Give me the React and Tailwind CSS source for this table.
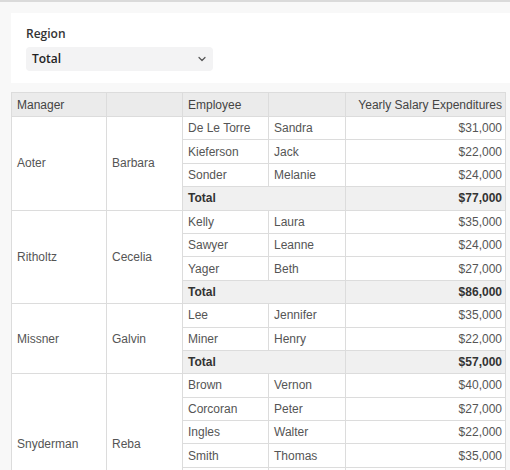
import React from "react";

const groups = [
  {
    last: "Aoter",
    first: "Barbara",
    rows: [
      ["De Le Torre", "Sandra", "$31,000"],
      ["Kieferson", "Jack", "$22,000"],
      ["Sonder", "Melanie", "$24,000"],
    ],
    total: "$77,000",
  },
  {
    last: "Ritholtz",
    first: "Cecelia",
    rows: [
      ["Kelly", "Laura", "$35,000"],
      ["Sawyer", "Leanne", "$24,000"],
      ["Yager", "Beth", "$27,000"],
    ],
    total: "$86,000",
  },
  {
    last: "Missner",
    first: "Galvin",
    rows: [
      ["Lee", "Jennifer", "$35,000"],
      ["Miner", "Henry", "$22,000"],
    ],
    total: "$57,000",
  },
  {
    last: "Snyderman",
    first: "Reba",
    rows: [
      ["Brown", "Vernon", "$40,000"],
      ["Corcoran", "Peter", "$27,000"],
      ["Ingles", "Walter", "$22,000"],
      ["Smith", "Thomas", "$35,000"],
      ["", "", ""],
    ],
    total: "",
  },
];

const td = "border border-[#dcdcdc] h-[23.4px] px-[5px] py-0 align-middle";

export default function App() {
  return (
    <div
      className="w-[510px] h-[470px] overflow-hidden bg-[#f8f8f8] border-t-2 border-[#dadada]"
      style={{ fontFamily: '"Liberation Sans", Arial, sans-serif' }}
    >
      <div className="ml-[11px] mt-[11px] bg-white h-[70px] pl-[15px] pt-[13px]">
        <div
          className="text-[12px] font-semibold text-[#333] leading-[16px]"
          style={{ fontFamily: '"Open Sans", "Noto Sans", sans-serif' }}
        >
          Region
        </div>
        <div className="mt-[5px] w-[187px] h-[24px] rounded-[4px] bg-[#f3f3f4] flex items-center justify-between pl-[6px] pr-[6px]">
          <span
            className="text-[12px] font-semibold text-[#222]"
            style={{ fontFamily: '"Open Sans", "Noto Sans", sans-serif' }}
          >
            Total
          </span>
          <svg width="10" height="10" viewBox="0 0 10 10" fill="none">
            <path d="M2 3.5 L5 6.5 L8 3.5" stroke="#555" strokeWidth="1.2" strokeLinecap="round" strokeLinejoin="round" />
          </svg>
        </div>
      </div>
      <table className="ml-[11px] mt-[9px] border-collapse text-[12px] text-[#555] table-fixed w-[494px]">
        <colgroup>
          <col className="w-[95px]" />
          <col className="w-[76px]" />
          <col className="w-[86px]" />
          <col className="w-[77px]" />
          <col className="w-[160px]" />
        </colgroup>
        <thead>
          <tr className="bg-[#ebebeb] text-[#444]">
            <th className={`${td} h-[24px] font-normal text-left`}>Manager</th>
            <th className={`${td} h-[24px] font-normal text-left`}></th>
            <th className={`${td} h-[24px] font-normal text-left`}>Employee</th>
            <th className={`${td} h-[24px] font-normal text-left`}></th>
            <th className={`${td} h-[24px] font-normal text-right pr-[3px]`}>Yearly Salary Expenditures</th>
          </tr>
        </thead>
        <tbody>
          {groups.map((g) => (
            <React.Fragment key={g.last}>
              {g.rows.map((r, i) => (
                <tr key={i} className="bg-white">
                  {i === 0 && (
                    <>
                      <td rowSpan={g.rows.length + 1} className={td}>
                        {g.last}
                      </td>
                      <td rowSpan={g.rows.length + 1} className={td}>
                        {g.first}
                      </td>
                    </>
                  )}
                  <td className={td}>{r[0]}</td>
                  <td className={td}>{r[1]}</td>
                  <td className={`${td} text-right pr-[3px]`}>{r[2]}</td>
                </tr>
              ))}
              <tr className="bg-[#f0f0f0] font-bold text-[#333]">
                <td colSpan={2} className={td}>
                  {g.total ? "Total" : ""}
                </td>
                <td className={`${td} text-right pr-[3px]`}>{g.total}</td>
              </tr>
            </React.Fragment>
          ))}
        </tbody>
      </table>
    </div>
  );
}
